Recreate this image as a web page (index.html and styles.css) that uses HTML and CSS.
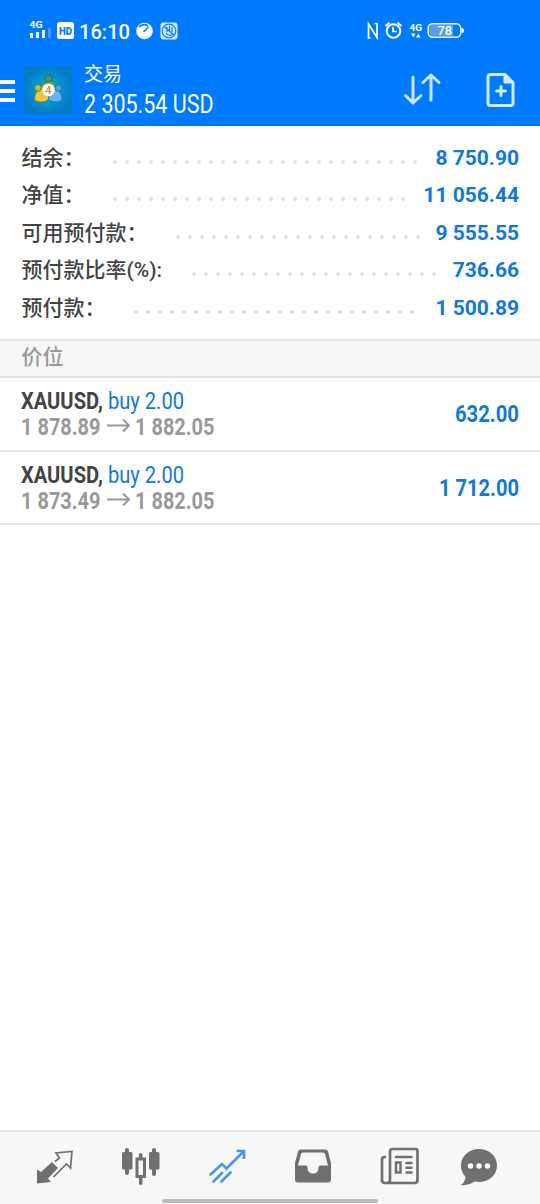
FILE: index.html
```html
<!DOCTYPE html>
<html lang="zh-CN">
<head>
<meta charset="utf-8">
<title>交易</title>
<link rel="stylesheet" href="styles.css">
</head>
<body>
<div class="app">
  <header class="top">
    <div class="status">
      <svg class="status-left" viewBox="0 0 180 40">
        <g fill="#fff">
          <text class="net" x="29.5" y="28" textLength="13" lengthAdjust="spacingAndGlyphs">4G</text>
          <path d="M30 33h3v5h-3zM36 32h3v6h-3zM42 30h3v8h-3z"/>
          <path d="M48 28h3v10h-3z" opacity=".25"/>
          <rect x="57" y="22" width="17" height="17" rx="2.5"/>
          <text class="hd" x="59" y="34.500" textLength="13" lengthAdjust="spacingAndGlyphs">HD</text>
          <text class="clock" x="79" y="39" textLength="51" lengthAdjust="spacingAndGlyphs">16:10</text>
          <circle cx="144.500" cy="31" r="8.300"/>
        </g>
        <path d="M143.500 32l5-5M139 27q5-4 9-1" stroke="#087cff" stroke-width="1.700" fill="none"/>
        <rect x="160.500" y="22.500" width="17" height="17" rx="3" fill="#d3eaff"/>
        <g fill="none" stroke="#087cff" stroke-width="1.200">
          <circle cx="169" cy="31" r="6.800"/>
          <path d="M164.500 27l9.500 8M167 27v5M169.500 26v6M172 27v5M166 33q3 4 7 1"/>
        </g>
      </svg>
      <svg class="status-right" viewBox="360 0 110 40">
        <g fill="none" stroke="#fff" stroke-width="2">
          <path d="M370.500 38h-2V24l8.500 13.500V23.500h-2.500" stroke-width="1.700"/>
          <circle cx="393.500" cy="31" r="6.800"/>
          <path d="M393 27v4.500h4M385.500 26l4-3.500M401.500 26l-4-3.500" stroke-width="1.700"/>
        </g>
        <text class="net" x="409.500" y="30.500" fill="#fff" textLength="12.500" lengthAdjust="spacingAndGlyphs">4G</text>
        <path d="M411 33.500h4.500l-2.200 4zM416 37.500h4.500l-2.200-4z" fill="#fff"/>
        <rect x="428.200" y="23.700" width="32.500" height="13.500" rx="4.500" fill="none" stroke="#fff" stroke-width="1.500"/>
        <path d="M432.500 25H453v11h-20.500q-3 0-3-3v-5q0-3 3-3z" fill="#5a9de8"/>
        <path d="M461.500 28q2.500 0 2.500 2.500t-2.500 2.500z" fill="#fff"/>
        <text class="battery" x="437.500" y="35" fill="#fff" textLength="14.500" lengthAdjust="spacingAndGlyphs">78</text>
      </svg>
    </div>
    <div class="toolbar">
      <div class="menu"><i></i><i></i><i></i></div>
      <svg class="logo" viewBox="0 0 48 48">
        <defs>
          <radialGradient id="sea"><stop stop-color="#00b9d5"/><stop offset="1" stop-color="#0878c8"/></radialGradient>
        </defs>
        <rect width="48" height="48" rx="4" fill="url(#sea)"/>
        <g stroke-width=".8">
          <path d="M16 26q-1-10 8.500-11Q34 16 33 26z" fill="#5fae62" stroke="#2c6d58"/>
          <circle cx="24.500" cy="12.500" r="3.500" fill="#4a9463" stroke="#24615a"/>
          <path d="M10.500 33q0-9 8.500-10 6 4 5.500 10-2 3-7 3-6 0-7-3z" fill="#ecc93d" stroke="#8d7532"/>
          <circle cx="14" cy="22" r="3.300" fill="#c9bd4a" stroke="#756f37"/>
          <path d="M38 33q0-9-8.500-10-6 4-5 10 2 3 6.500 3 6 0 7-3z" fill="#62b6ef" stroke="#24679f"/>
          <circle cx="34.500" cy="22" r="3.300" fill="#4ba3df" stroke="#24679f"/>
        </g>
        <circle cx="24.500" cy="24" r="6.300" fill="#fff"/>
        <text class="logo-num" x="21.300" y="28">4</text>
      </svg>
      <div class="heading">
        <div class="title">交易</div>
        <svg class="profit" viewBox="0 0 132 28"><text x="0" y="22" textLength="129.500" lengthAdjust="spacingAndGlyphs">2 305.54 USD</text></svg>
      </div>
      <svg class="sort" viewBox="0 0 40 36"><path d="M11 4v26M3.500 22.500 11 30l8-7.500M29 27V2M21 9.500 29 2l8 7.500"/></svg>
      <svg class="new-order" viewBox="0 0 32 36"><path d="M5.500 2.500H20l8 8V31q0 2.500-2.500 2.500h-20Q3 33.500 3 31V5q0-2.500 2.500-2.500zM16 14.500v9M11.500 19h9"/><path class="fold" d="M19 2v9h9z"/></svg>
    </div>
  </header>

  <section class="summary">
    <div class="line"><span class="label short">结余：</span><span class="dots" style="width:312px"></span><b>8 750.90</b></div>
    <div class="line"><span class="label short">净值：</span><span class="dots" style="width:300px"></span><b>11 056.44</b></div>
    <div class="line"><span class="label long">可用预付款：</span><span class="dots" style="width:252px"></span><b>9 555.55</b></div>
    <div class="line"><span class="label longest">预付款比率(%):</span><span class="dots" style="width:252px"></span><b>736.66</b></div>
    <div class="line"><span class="label medium">预付款：</span><span class="dots" style="width:288px"></span><b>1 500.89</b></div>
  </section>

  <h2 class="section">价位</h2>
  <ul class="positions">
    <li>
      <svg class="deal" viewBox="0 0 200 60">
        <text class="side" x="0" y="24" textLength="163" lengthAdjust="spacingAndGlyphs"><tspan class="symbol">XAUUSD,</tspan> buy 2.00</text>
        <text class="price" x="0" y="49.500" textLength="79.500" lengthAdjust="spacingAndGlyphs">1 878.89</text>
        <path d="M86 40.500h22M102 34.500l6 6-6 6"/>
        <text class="price" x="114" y="49.500" textLength="79.500" lengthAdjust="spacingAndGlyphs">1 882.05</text>
      </svg>
      <svg class="gain" viewBox="0 0 90 30"><text x="26" y="23" textLength="64" lengthAdjust="spacingAndGlyphs">632.00</text></svg>
    </li>
    <li>
      <svg class="deal" viewBox="0 0 200 60">
        <text class="side" x="0" y="24" textLength="163" lengthAdjust="spacingAndGlyphs"><tspan class="symbol">XAUUSD,</tspan> buy 2.00</text>
        <text class="price" x="0" y="49.500" textLength="79.500" lengthAdjust="spacingAndGlyphs">1 873.49</text>
        <path d="M86 40.500h22M102 34.500l6 6-6 6"/>
        <text class="price" x="114" y="49.500" textLength="79.500" lengthAdjust="spacingAndGlyphs">1 882.05</text>
      </svg>
      <svg class="gain" viewBox="0 0 90 30"><text x="10" y="23" textLength="80" lengthAdjust="spacingAndGlyphs">1 712.00</text></svg>
    </li>
  </ul>

  <nav class="tabs">
    <div class="icons">
      <svg viewBox="0 0 40 40"><path d="M2 23.500l4 2.500L17 16l6 6-10 10.500 3 3.500-14 1.500z" fill="#707070"/><path d="M20 15.500l4.500-3.500-3.500-5 16-1.500-1.500 16.500-4-4-13 13" fill="none" stroke="#707070" stroke-width="1.700"/></svg>
      <svg viewBox="0 0 40 40" fill="#707070"><rect x="5" y="2" width="4" height="27" rx="2"/><rect x="2" y="6" width="10.500" height="17.500" rx="1.500"/><rect x="32" y="2" width="4" height="28" rx="2"/><rect x="29" y="6" width="10.500" height="17.500" rx="1.500"/><rect x="18.900" y="7" width="3.600" height="32" rx="1.800"/><rect x="17" y="13" width="7.500" height="17.500" fill="#f7f7f7" stroke="#707070" stroke-width="3"/></svg>
      <svg viewBox="0 0 40 40" fill="none" stroke="#4997e5" stroke-width="2.700" stroke-linecap="round"><path d="M3.500 28.500 15 18l4.500 4.500L35 7M6.500 35.500l8.500-8.500M14.500 35.500l9-9"/><path d="M29.500 5H37v8" stroke-linecap="butt"/></svg>
      <svg viewBox="0 0 40 40"><path fill="#707070" fill-rule="evenodd" d="M8 3.500h24q2.500 0 3 2L38 17v16.500q0 3-3 3H5q-3 0-3-3V17L5 5.500q.5-2 3-2zM10 6.500q-1.500 0-2 1.500L5 19.500h8q1.500 0 1.500 2 0 6 5.500 6t5.500-6q0-2 1.500-2h8L32 8q-.5-1.500-2-1.500z"/></svg>
      <svg viewBox="0 0 40 40" fill="none" stroke="#707070" stroke-width="2.700"><path d="M12.500 3h23q2 0 2 2v29q0 3-3 3H5q-3 0-3-3V13.500Q2 11 4.500 11H6M10 34V5.500Q10 3 12.500 3M10 34q0 3-3 3"/><path d="M16 11h15.500M26.500 17h5M26.500 21.700h5M26.500 26.400h5" stroke-width="2.500" stroke-linecap="round"/><rect x="16" y="16.500" width="4.500" height="10" stroke-width="2.500"/></svg>
      <svg viewBox="0 0 40 40"><path fill="#707070" d="M20 3c10 0 18 7 18 16.500S30 36 20 36l-4-.5Q9 40 2 39q4-3 4.500-8Q2 26 2 19.500C2 10 10 3 20 3z"/><g fill="#fff"><circle cx="11.500" cy="20" r="2.700"/><circle cx="20" cy="20" r="2.700"/><circle cx="28.500" cy="20" r="2.700"/></g></svg>
    </div>
    <div class="home-bar"></div>
  </nav>
</div>
</body>
</html>
```

FILE: styles.css
```css
* { box-sizing: border-box; }
body { margin: 0; background: #fff; font-family: Roboto, "Noto Sans CJK SC", sans-serif; }
svg { display: block; flex: none; overflow: visible; }
.app { height: 1204px; width: 540px; display: flex; flex-direction: column; overflow: hidden; }

.top { height: 126px; background: #007aff; border-bottom: 1px solid #0870e0; flex: none; }
.status { height: 56px; display: flex; justify-content: space-between; padding-right: 70px; }
.status-left { width: 180px; height: 40px; }
.status-right { width: 110px; height: 40px; }
.net { font-size: 9.5px; font-weight: 700; }
.hd { font-size: 11px; font-weight: 900; fill: #087cff; }
.clock { font-size: 21px; font-weight: 500; }
.battery { font-size: 12px; font-weight: 500; }
.toolbar { height: 69px; display: flex; align-items: flex-start; }
.menu { width: 24px; padding-top: 24px; display: flex; flex-direction: column; gap: 5px; }
.menu i { width: 15px; height: 4px; background: #fff; }
.logo { width: 48px; height: 48px; margin-top: 10px; }
.logo-num { font-size: 11px; fill: #ef7940; font-weight: 500; }
.heading { margin-left: 12px; width: 132px; padding-top: 7px; }
.title { color: #fff; font-size: 19px; line-height: 24px; height: 28px; }
.profit { width: 132px; height: 28px; font-size: 25.5px; fill: #fff; }
.sort { width: 40px; height: 36px; margin: 17px 0 0 186px; fill: none; stroke: #cae5ff; stroke-width: 3; stroke-linecap: round; stroke-linejoin: round; }
.new-order { width: 32px; height: 36px; margin: 16px 0 0 43px; fill: none; stroke: #d2e9ff; stroke-width: 3; stroke-linecap: round; stroke-linejoin: round; }
.fold { fill: #d2e9ff; stroke-width: 1; }

.summary { height: 213px; padding: 13px 21px 0; flex: none; }
.line { height: 37.5px; display: flex; align-items: center; }
.label { color: #444; font-size: 21px; font-weight: 500; white-space: nowrap; flex: none; padding-bottom: 4px; text-indent: .5px; }
.short { width: 88px; }
.medium { width: 109px; }
.long { width: 151px; }
.longest { width: 167px; }
.dots { height: 12px; margin-top: 8px; background: radial-gradient(circle, #dfdfdf 1.5px, transparent 2.2px) 0 0 / 12px 12px; }
.line b { margin-left: auto; color: #1278dc; font-size: 21px; font-weight: 700; white-space: nowrap; }

.section { height: 39px; flex: none; margin: 0; padding-left: 21.5px; background: #f6f6f6; border-top: 2px solid #e6e6e6; border-bottom: 2px solid #e3e3e3; color: #999; font-size: 21px; line-height: 32px; font-weight: 500; }
.positions { margin: 0; padding: 0; list-style: none; }
.positions li { height: 73.5px; padding: 7px 21px 0; display: flex; justify-content: space-between; border-bottom: 2px solid #e6e6e6; }
.deal { width: 200px; height: 60px; font-size: 24px; }
.side { fill: #1278dc; }
.symbol { fill: #444; font-weight: 700; }
.price { fill: #999; font-weight: 700; }
.deal path { fill: none; stroke: #999; stroke-width: 2; }
.gain { width: 90px; height: 30px; margin-top: 14px; font-size: 24px; font-weight: 700; fill: #1278dc; }

.tabs { margin-top: auto; height: 74px; background: #f7f7f7; border-top: 2px solid #e6e6e6; padding: 14px 40px 0 35px; }
.icons { display: grid; grid-template-columns: 85px 87px 86px 87px 79px 40px; }
.icons svg { width: 40px; height: 40px; }
.home-bar { width: 216px; height: 4px; margin: 13px 0 0 127px; border-radius: 2px; background: #bbb; }
```
